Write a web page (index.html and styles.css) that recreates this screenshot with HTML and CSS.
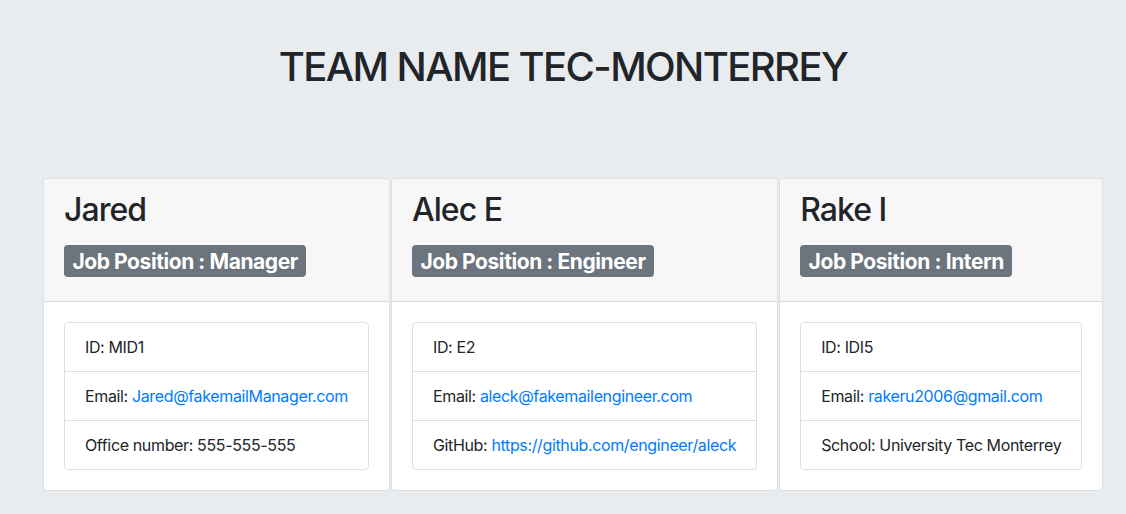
FILE: index.html
```html
<!DOCTYPE html>
<html lang="en">
<head>
<meta charset="utf-8">
<title>Team</title>
<link rel="stylesheet" href="styles.css">
</head>
<body>
<header class="hero">
  <h1 class="title">TEAM NAME TEC-MONTERREY</h1>
</header>
<main class="team">
  <section class="card">
    <div class="card-header">
      <h2 class="name">Jared</h2>
      <div class="role"><span class="badge">Job Position : Manager</span></div>
    </div>
    <div class="card-body">
      <ul class="list">
        <li class="item">ID: MID1</li>
        <li class="item">Email: <a href="#" class="link">Jared@fakemailManager.com</a></li>
        <li class="item">Office number: 555-555-555</li>
      </ul>
    </div>
  </section>
  <section class="card">
    <div class="card-header">
      <h2 class="name">Alec E</h2>
      <div class="role"><span class="badge">Job Position : Engineer</span></div>
    </div>
    <div class="card-body">
      <ul class="list">
        <li class="item">ID: E2</li>
        <li class="item">Email: <a href="#" class="link">aleck@fakemailengineer.com</a></li>
        <li class="item">GitHub: <a href="#" class="link">https://github.com/engineer/aleck</a></li>
      </ul>
    </div>
  </section>
  <section class="card">
    <div class="card-header">
      <h2 class="name">Rake I</h2>
      <div class="role"><span class="badge">Job Position : Intern</span></div>
    </div>
    <div class="card-body">
      <ul class="list">
        <li class="item">ID: IDI5</li>
        <li class="item">Email: <a href="#" class="link">rakeru2006@gmail.com</a></li>
        <li class="item">School: University Tec Monterrey</li>
      </ul>
    </div>
  </section>
</main>
</body>
</html>
```

FILE: styles.css
```css
* { box-sizing: border-box; }
html, body {
  margin: 0;
  padding: 0;
}
body {
  background: #e9ecef;
  color: #212529;
  font-family: Inter, "Noto Sans", "Liberation Sans", sans-serif;
  font-size: 16px;
  line-height: 1.5;
  letter-spacing: -0.0225em;
}
.hero {
  padding-top: 43px;
  height: 178px;
  text-align: center;
}
.title {
  margin: 0;
  font-size: 40px;
  font-weight: 500;
  line-height: 48px;
  letter-spacing: -0.04em;
}
.team {
  display: flex;
  align-items: flex-start;
  gap: 1px;
  padding-left: 43px;
}
.card {
  background: #fff;
  border: 1px solid rgba(0,0,0,.125);
  border-radius: 4px;
  flex: 0 0 auto;
}
.card-header {
  background: #f7f7f7;
  border-bottom: 1px solid rgba(0,0,0,.125);
  padding: 12px 20px;
  border-radius: 3px 3px 0 0;
}
.name {
  margin: 0 0 16px;
  font-size: 32px;
  font-weight: 500;
  line-height: 38px;
  letter-spacing: -0.03em;
}
.role {
  margin: 0 0 12px;
  line-height: 1;
}
.badge {
  display: inline-block;
  background: #6c757d;
  color: #fff;
  font-size: 21px;
  font-weight: 700;
  line-height: 1;
  padding: 5.5px 8.4px;
  border-radius: 4px;
  letter-spacing: -0.02em;
}
.card-body {
  padding: 20px;
}
.list {
  list-style: none;
  margin: 0;
  padding: 0;
  border: 1px solid rgba(0,0,0,.125);
  border-radius: 4px;
}
.item {
  padding: 12px 20px;
  white-space: nowrap;
}
.item + .item {
  border-top: 1px solid rgba(0,0,0,.125);
}
.link {
  color: #007bff;
  text-decoration: none;
}
```
